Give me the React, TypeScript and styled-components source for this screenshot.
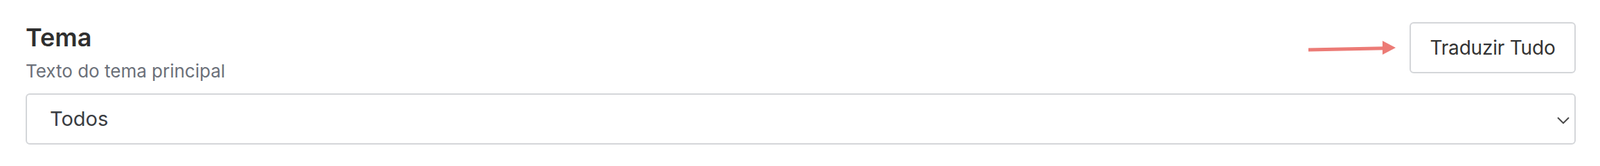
import styled, { createGlobalStyle } from "styled-components";

const GlobalStyle = createGlobalStyle`
  html, body {
    margin: 0;
    padding: 0;
    background: #ffffff;
  }
  body {
    font-family: Inter, Lato, "Liberation Sans", Arial, sans-serif;
  }
`;

const Page = styled.section`
  padding: 32px 35px 0 37px;
`;

const HeaderRow = styled.div`
  display: flex;
  align-items: flex-start;
  justify-content: space-between;
`;

const TitleBlock = styled.div`
  display: flex;
  flex-direction: column;
  gap: 11px;
`;

const Title = styled.h2`
  margin: 0;
  font-size: 36px;
  line-height: 44px;
  font-weight: 600;
  color: #2f2f2f;
`;

const Subtitle = styled.p`
  margin: 0;
  font-size: 26px;
  line-height: 32px;
  font-weight: 400;
  color: #6b7079;
`;

const Actions = styled.div`
  display: flex;
  align-items: center;
  gap: 20px;
`;

const Button = styled.button`
  box-sizing: border-box;
  height: 74px;
  width: 240px;
  padding: 0;
  border: 2px solid #d4d6d9;
  border-radius: 6px;
  background: #ffffff;
  font-family: inherit;
  font-size: 28px;
  line-height: 36px;
  letter-spacing: -0.2px;
  white-space: nowrap;
  color: #333333;
  cursor: pointer;
`;

const SelectBox = styled.div`
  position: relative;
  box-sizing: border-box;
  margin-top: 16px;
  height: 74px;
  display: flex;
  align-items: center;
  padding: 0 40px 0 33px;
  border: 2px solid #d4d6d9;
  border-radius: 6px;
  background: #ffffff;
  font-size: 29px;
  line-height: 36px;
  color: #3a3d42;
`;

const Chevron = styled.svg`
  position: absolute;
  right: 7px;
  top: 50%;
  margin-top: -3px;
  width: 18px;
  height: 10px;
`;

function Arrow() {
  return (
    <svg width="126" height="20" viewBox="0 0 126 20">
      <line x1="0" y1="13" x2="110" y2="10.8" stroke="#ec7b76" strokeWidth="5" />
      <polygon points="107,0 126,10 107,20" fill="#ec7b76" />
    </svg>
  );
}

export default function App() {
  return (
    <>
      <GlobalStyle />
      <Page>
        <HeaderRow>
          <TitleBlock>
            <Title>Tema</Title>
            <Subtitle>Texto do tema principal</Subtitle>
          </TitleBlock>
          <Actions>
            <Arrow />
            <Button>Traduzir Tudo</Button>
          </Actions>
        </HeaderRow>
        <SelectBox>
          Todos
          <Chevron viewBox="0 0 18 10">
            <polyline
              points="1,1 9,9 17,1"
              fill="none"
              stroke="#4a4a4a"
              strokeWidth="2"
            />
          </Chevron>
        </SelectBox>
      </Page>
    </>
  );
}
